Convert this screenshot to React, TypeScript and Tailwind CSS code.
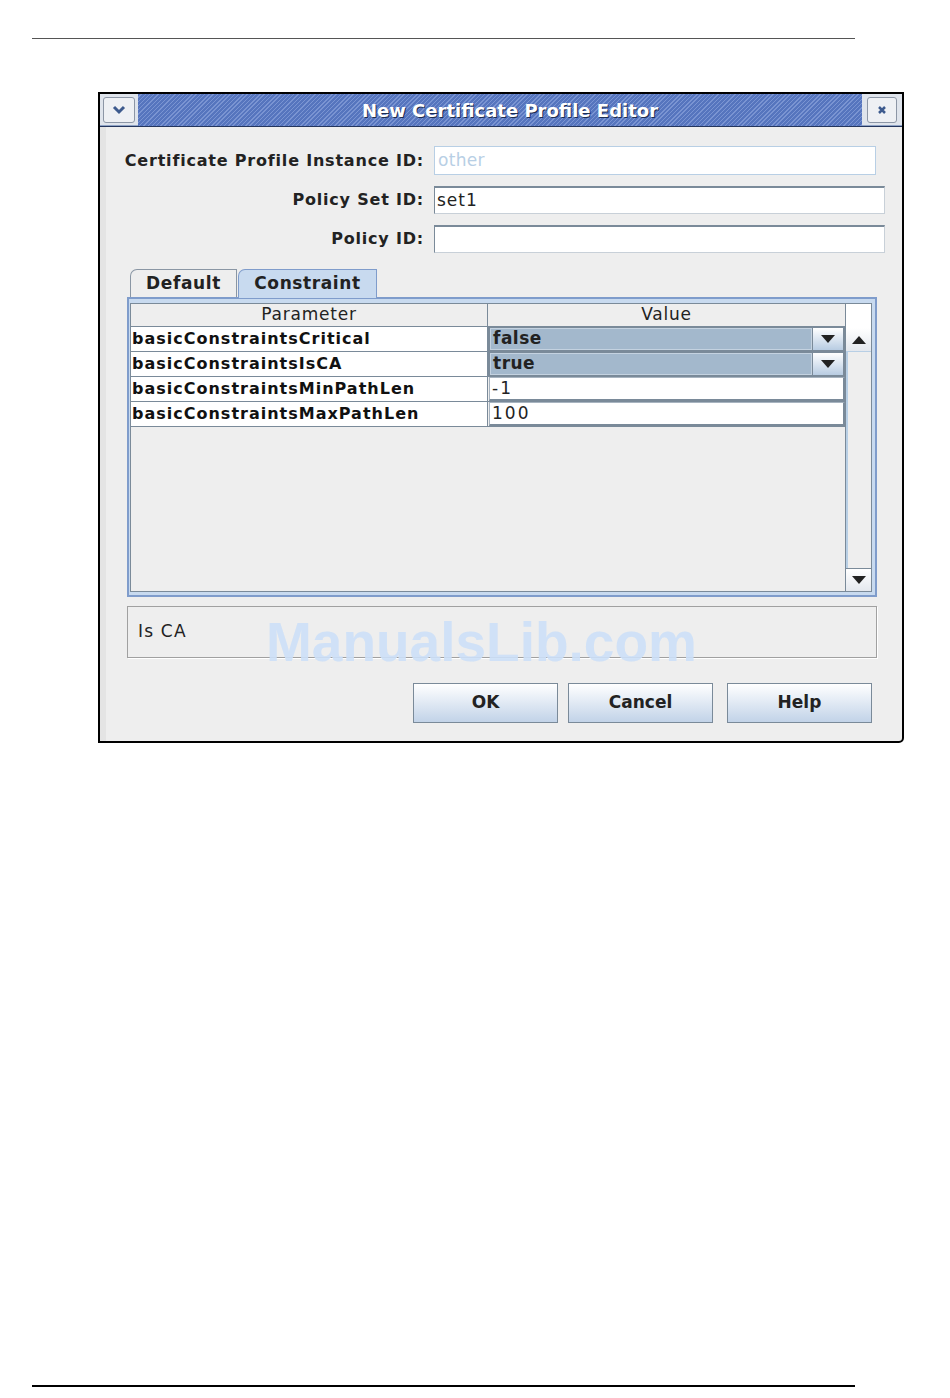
const rows = [
  { name: 'basicConstraintsCritical', value: 'false', combo: true },
  { name: 'basicConstraintsIsCA', value: 'true', combo: true },
  { name: 'basicConstraintsMinPathLen', value: '-1', combo: false },
  { name: 'basicConstraintsMaxPathLen', value: '100', combo: false },
];

function Triangle({ up }: { up?: boolean }) {
  return (
    <svg width="14" height="8" viewBox="0 0 14 8">
      {up ? <polygon points="0,8 14,8 7,0" fill="#222" /> : <polygon points="0,0 14,0 7,8" fill="#222" />}
    </svg>
  );
}

function Field({ w, value, disabled }: { w: string; value: string; disabled?: boolean }) {
  return (
    <div
      className={
        disabled
          ? `${w} ml-[10px] h-[29px] bg-white border border-[#b8cfe5] pl-[3px] flex items-center text-[17px] tracking-[0.3px] text-[#b8cfe5]`
          : `${w} ml-[10px] h-[28px] bg-white border border-[#7a8a99] border-t-2 border-b-[#c8d0d8] border-r-[#c8d0d8] pl-[2px] flex items-center text-[17px] tracking-[1px] text-[#222]`
      }
    >
      {value}
    </div>
  );
}

export default function App() {
  return (
    <div className="relative w-[950px] h-[1398px] bg-white pt-[38px] font-['DejaVu_Sans',sans-serif] text-[#222]">
      <div className="ml-[32px] w-[823px] h-px bg-[#555]" />

      <div className="ml-[98px] mt-[53px] w-[806px] h-[651px] border-2 border-black rounded-br-[5px] bg-[#eeeeee] flex flex-col">
        {/* title bar */}
        <div className="h-[33px] flex border-b border-[#24365e]">
          <div className="w-[38px] bg-[#dfe4ec] flex items-center justify-center border-b border-[#8fa3c6]">
            <div className="w-[32px] h-[26px] rounded-[3px] border border-[#8c96a6] bg-[#eef0f4] flex items-center justify-center">
              <svg width="14" height="10" viewBox="0 0 14 10">
                <path d="M2 2 L7 7 L12 2" stroke="#3d5a8e" strokeWidth="3" fill="none" />
              </svg>
            </div>
          </div>
          <div className="flex-1 flex items-center justify-center pl-[20px] bg-[repeating-linear-gradient(135deg,#5675be_0px,#5675be_2px,#7a94d2_2px,#7a94d2_3px)]">
            <span className="text-white font-bold text-[18px] [text-shadow:1px_1px_0_#1c2c50]">
              New Certificate Profile Editor
            </span>
          </div>
          <div className="w-[40px] bg-[#dfe4ec] flex items-center justify-center border-b border-[#8fa3c6]">
            <div className="w-[30px] h-[26px] rounded-[3px] border border-[#8c96a6] bg-[#eef0f4] flex items-center justify-center">
              <svg width="10" height="10" viewBox="0 0 10 10">
                <path d="M2 2 L8 8 M8 2 L2 8" stroke="#3d5a8e" strokeWidth="2.5" />
              </svg>
            </div>
          </div>
        </div>

        {/* body */}
        <div className="relative flex-1 pt-[19px] border-l-[6px] border-[#e4e4e4]">
          <div className="flex items-center">
            <div className="w-[318px] text-right font-bold text-[16px] tracking-[0.8px]">Certificate Profile Instance ID:</div>
            <Field w="w-[442px]" value="other" disabled />
          </div>
          <div className="flex items-center mt-[11px]">
            <div className="w-[318px] text-right font-bold text-[16px] tracking-[0.8px]">Policy Set ID:</div>
            <Field w="w-[451px]" value="set1" />
          </div>
          <div className="flex items-center mt-[11px]">
            <div className="w-[318px] text-right font-bold text-[16px] tracking-[0.8px]">Policy ID:</div>
            <Field w="w-[451px]" value="" />
          </div>

          {/* tabs */}
          <div className="mt-[15px] ml-[24px] flex items-end h-[29px]">
            <div className="w-[107px] h-[28px] border border-b-0 border-[#8a96a4] rounded-tl-[7px] flex items-center justify-center font-bold text-[17px] tracking-[0.6px]">
              Default
            </div>
            <div className="w-[139px] h-[29px] ml-px border border-b-0 border-[#7f9ccb] rounded-tl-[7px] bg-[#c8daef] flex items-center justify-center font-bold text-[17px] tracking-[0.6px] relative top-[1px]">
              Constraint
            </div>
          </div>

          {/* panel */}
          <div className="ml-[21px] w-[750px] h-[300px] border-2 border-[#7f9ccb] bg-[#c8daef] pt-[4px] pl-px pr-[3px] pb-[3px] flex">
            <div className="flex-1 border border-[#7a8a99] bg-[#eeeeee] flex">
              <div className="w-[714px] flex flex-col">
                <div className="h-[23px] flex border-b border-[#7a8a99]">
                  <div className="w-[357px] border-r border-[#7a8a99] flex items-center justify-center text-[17px] tracking-[0.8px]">
                    Parameter
                  </div>
                  <div className="flex-1 flex items-center justify-center text-[17px] tracking-[0.8px]">Value</div>
                </div>
                {rows.map((r) => (
                  <div key={r.name} className="h-[25px] flex border-b border-[#7a8a99]">
                    <div className="w-[357px] bg-white border-r border-[#7a8a99] pl-[1px] flex items-center font-bold text-[16px] tracking-[1px] text-[#111]">
                      {r.name}
                    </div>
                    {r.combo ? (
                      <div className="flex-1 flex bg-[#7a8a99] px-[2px] py-px">
                        <div className="flex-1 bg-[#a3b8cc] border border-[#c4d2e0] pl-[2px] flex items-center font-bold text-[17px] tracking-[0.5px] text-[#222]">
                          {r.value}
                        </div>
                        <div className="w-[30px] ml-px bg-gradient-to-b from-white to-[#b8cce2] flex items-center justify-center">
                          <Triangle />
                        </div>
                      </div>
                    ) : (
                      <div className="flex-1 bg-white border border-[#a8b4c0] border-r-2 border-r-[#7a8a99] border-b-2 border-b-[#7a8a99] ml-px pl-[2px] flex items-center text-[17px] tracking-[2px]">
                        {r.value}
                      </div>
                    )}
                  </div>
                ))}
              </div>
              <div className="flex-1 border-l border-[#7a8a99] flex flex-col">
                <div className="h-[24px] bg-white" />
                <div className="h-[24px] bg-gradient-to-b from-white to-[#e4e8ee] border-b border-[#b8cfe5] flex items-center justify-center">
                  <Triangle up />
                </div>
                <div className="flex-1 border-l-2 border-[#b8cfe5]" />
                <div className="h-[23px] bg-gradient-to-b from-white to-[#e4e8ee] border-t border-[#7a8a99] flex items-center justify-center">
                  <Triangle />
                </div>
              </div>
            </div>
          </div>

          {/* description */}
          <div className="mt-[9px] ml-[21px] w-[750px] h-[52px] border border-[#a0a0a0] flex items-center pl-[10px] text-[17px] tracking-[1.2px] shadow-[1px_1px_0_#ffffff]">
            Is CA
          </div>

          {/* buttons */}
          <div className="mt-[25px] ml-[307px] flex">
            <button className="w-[145px] h-[40px] border border-[#7a8a99] bg-gradient-to-b from-white to-[#c2d3e8] font-bold text-[17px]">
              OK
            </button>
            <button className="ml-[10px] w-[145px] h-[40px] border border-[#7a8a99] bg-gradient-to-b from-white to-[#c2d3e8] font-bold text-[17px]">
              Cancel
            </button>
            <button className="ml-[14px] w-[145px] h-[40px] border border-[#7a8a99] bg-gradient-to-b from-white to-[#c2d3e8] font-bold text-[17px]">
              Help
            </button>
          </div>

          <div className="absolute left-[160px] top-[488px] font-['Liberation_Sans',sans-serif] font-bold text-[55px] leading-none text-[#cde0f8] opacity-90 pointer-events-none">
            ManualsLib.com
          </div>
        </div>
      </div>

      <div className="ml-[32px] mt-[642px] w-[823px] h-[2px] bg-black" />
    </div>
  );
}
